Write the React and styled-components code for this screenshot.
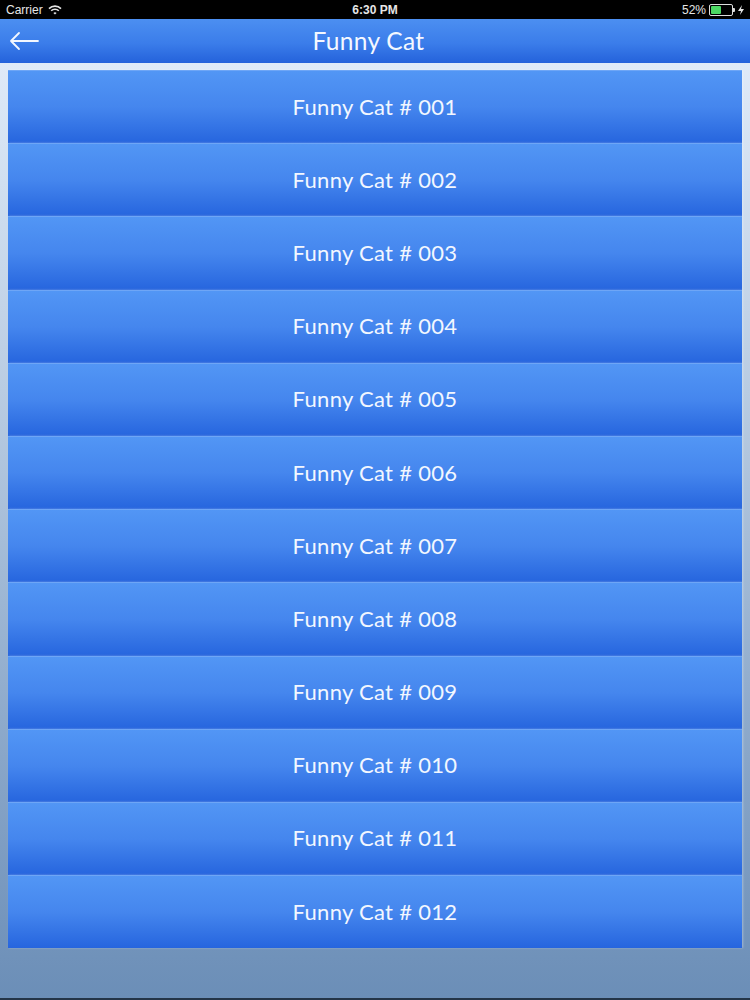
import React from "react";
import styled, { createGlobalStyle } from "styled-components";

const Global = createGlobalStyle`
  html, body { margin: 0; padding: 0; }
  body { font-family: "Lato", "Noto Sans", sans-serif; }
`;

const Screen = styled.div`
  width: 750px;
  height: 1000px;
  display: flex;
  flex-direction: column;
  overflow: hidden;
`;

const StatusBar = styled.div`
  height: 19px;
  background: #000;
  color: #e6e6e6;
  font-family: "Liberation Sans", Arial, sans-serif;
  font-size: 12px;
  display: grid;
  grid-template-columns: 1fr auto 1fr;
  align-items: center;
  padding: 0 6px;
`;

const StatusLeft = styled.div`
  display: flex;
  align-items: center;
  gap: 5px;
`;

const StatusCenter = styled.div`
  font-weight: bold;
  font-size: 12px;
`;

const StatusRight = styled.div`
  display: flex;
  align-items: center;
  justify-content: flex-end;
  gap: 3px;
`;

const Battery = styled.div`
  width: 20px;
  height: 8px;
  border: 1px solid #ddd;
  border-radius: 2px;
  padding: 1px;
  display: flex;
`;

const BatteryFill = styled.div`
  background: #4cd964;
  height: 100%;
  border-radius: 1px;
`;

const BatteryTip = styled.div`
  width: 2px;
  height: 4px;
  background: #ddd;
  border-radius: 0 1px 1px 0;
  margin-left: -3px;
`;

const NavBar = styled.div`
  height: 44px;
  background: linear-gradient(to bottom, #4c8ff1 0%, #3b7dea 55%, #2462db 100%);
  display: flex;
  align-items: center;
  justify-content: center;
  padding-right: 13px;
  position: relative;
`;

const BackButton = styled.div`
  position: absolute;
  left: 9px;
  top: 12px;
  display: flex;
`;

const Title = styled.div`
  color: #f4f8ff;
  font-size: 24.5px;
  letter-spacing: 0.3px;
  margin-top: -1px;
`;

const Body = styled.div`
  flex: 1;
  background: linear-gradient(to bottom, #dfeaf8 0%, #b9cce2 35%, #8eaacb 70%, #6b8eb7 100%);
  padding: 7px 8px 0 8px;
  border-bottom: 2px solid #243548;
`;

const List = styled.div`
  display: flex;
  flex-direction: column;
`;

const Row = styled.div`
  height: 73.2px;
  box-sizing: border-box;
  border-top: 1px solid #6ea6f6;
  background: linear-gradient(to bottom, #5296f5 0%, #4586ee 50%, #2665de 100%);
  display: flex;
  align-items: center;
  justify-content: center;
  color: #f2f7ff;
  font-size: 22px;
  letter-spacing: 0.3px;
  padding-bottom: 2px;
  box-shadow: 1px 0 2px rgba(255, 255, 255, 0.35);
`;

const WifiIcon = () => (
  <svg width="14" height="10" viewBox="0 0 14 10">
    <path d="M1 3.6 A8.5 8.5 0 0 1 13 3.6" stroke="#e6e6e6" strokeWidth="1.6" fill="none" />
    <path d="M3.2 5.8 A5.3 5.3 0 0 1 10.8 5.8" stroke="#e6e6e6" strokeWidth="1.6" fill="none" />
    <path d="M5.4 8 A2.2 2.2 0 0 1 8.6 8 L7 9.6 Z" fill="#e6e6e6" />
  </svg>
);

const BackArrow = () => (
  <svg width="30" height="20" viewBox="0 0 30 20">
    <path d="M29 10 H2 M10 2 L2 10 L10 18" stroke="#f2f7ff" strokeWidth="1.8" fill="none" strokeLinecap="round" strokeLinejoin="round" />
  </svg>
);

const Bolt = () => (
  <svg width="6" height="10" viewBox="0 0 6 10">
    <path d="M4 0 L0 6 H3 L2 10 L6 4 H3 Z" fill="#e6e6e6" />
  </svg>
);

const items = Array.from({ length: 12 }, (_, i) => `Funny Cat # ${String(i + 1).padStart(3, "0")}`);

export default function App() {
  return (
    <Screen>
      <Global />
      <StatusBar>
        <StatusLeft>
          <span>Carrier</span>
          <WifiIcon />
        </StatusLeft>
        <StatusCenter>6:30 PM</StatusCenter>
        <StatusRight>
          <span>52%</span>
          <Battery>
            <BatteryFill style={{ width: "52%" }} />
          </Battery>
          <BatteryTip />
          <Bolt />
        </StatusRight>
      </StatusBar>
      <NavBar>
        <BackButton>
          <BackArrow />
        </BackButton>
        <Title>Funny Cat</Title>
      </NavBar>
      <Body>
        <List>
          {items.map((t) => (
            <Row key={t}>{t}</Row>
          ))}
        </List>
      </Body>
    </Screen>
  );
}
